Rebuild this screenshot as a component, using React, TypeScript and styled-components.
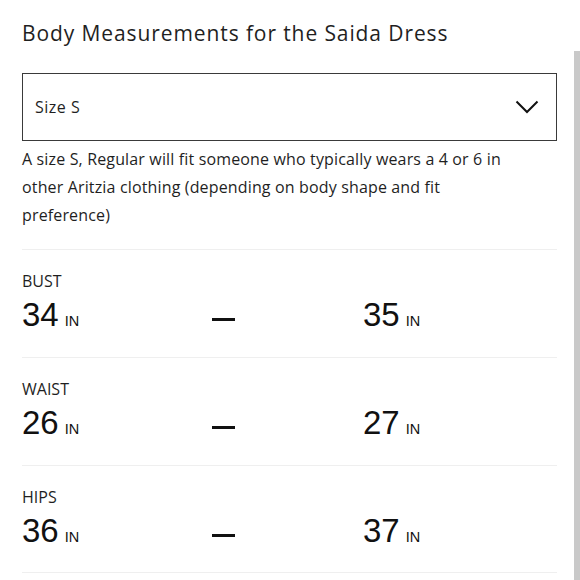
import React from 'react';
import styled, { createGlobalStyle } from 'styled-components';

const GlobalStyle = createGlobalStyle`
    html, body {
        margin: 0;
        padding: 0;
        background: #ffffff;
    }
    body {
        font-family: 'Open Sans', 'Noto Sans', sans-serif;
        color: #1f1f1f;
    }
`;

const Page = styled.div`
    width: 535px;
    padding: 18px 0 0 22px;
`;

const Title = styled.h2`
    margin: 0;
    font-size: 21px;
    font-weight: 400;
    line-height: 30px;
    letter-spacing: 0.9px;
`;

const SelectBox = styled.div`
    margin-top: 25px;
    height: 66px;
    border: 1px solid #3a3a3a;
    display: flex;
    align-items: center;
    justify-content: space-between;
    padding: 0 17px 0 12px;
    font-size: 16px;
    letter-spacing: 0.5px;
`;

const Description = styled.p`
    margin: 4px 0 0;
    max-width: 502px;
    font-size: 16px;
    line-height: 28px;
    letter-spacing: 0.15px;
`;

const Measurements = styled.div`
    margin-top: 20px;
`;

const Row = styled.div`
    border-top: 1px solid #efefef;
    height: 108px;
    padding-top: 20px;
    box-sizing: border-box;
    &:last-child {
        border-bottom: 1px solid #efefef;
    }
`;

const Label = styled.div`
    font-size: 16px;
    line-height: 22px;
    text-transform: uppercase;
`;

const Values = styled.div`
    display: grid;
    grid-template-columns: 190px 151px auto;
    align-items: center;
    margin-top: 3px;
`;

const Value = styled.div`
    font-family: 'Liberation Sans', Arial, sans-serif;
    font-size: 33px;
    line-height: 40px;
    color: #111;
`;

const Unit = styled.span`
    font-size: 14.5px;
    margin-left: 6px;
`;

const Dash = styled.div`
    width: 23px;
    height: 2.5px;
    background: #111;
    margin-top: 3px;
`;

const ScrollThumb = styled.div`
    position: fixed;
    top: 51px;
    right: 0;
    width: 6px;
    height: 529px;
    background: #c9c9c9;
`;

const measurements = [
    { label: 'Bust', min: 34, max: 35 },
    { label: 'Waist', min: 26, max: 27 },
    { label: 'Hips', min: 36, max: 37 },
];

const Chevron = () => (
    <svg width="24" height="14" viewBox="0 0 24 14" fill="none">
        <path d="M1.5 1.5 L12 12 L22.5 1.5" stroke="#111" strokeWidth="2" />
    </svg>
);

const App = () => {
    return (
        <>
            <GlobalStyle />
            <Page>
                <Title>Body Measurements for the Saida Dress</Title>
                <SelectBox>
                    <span>Size S</span>
                    <Chevron />
                </SelectBox>
                <Description>
                    A size S, Regular will fit someone who typically wears a 4 or 6 in other
                    Aritzia clothing (depending on body shape and fit preference)
                </Description>
                <Measurements>
                    {measurements.map((m) => (
                        <Row key={m.label}>
                            <Label>{m.label}</Label>
                            <Values>
                                <Value>
                                    {m.min}
                                    <Unit>IN</Unit>
                                </Value>
                                <Dash />
                                <Value>
                                    {m.max}
                                    <Unit>IN</Unit>
                                </Value>
                            </Values>
                        </Row>
                    ))}
                </Measurements>
            </Page>
            <ScrollThumb />
        </>
    );
};

export default App;
